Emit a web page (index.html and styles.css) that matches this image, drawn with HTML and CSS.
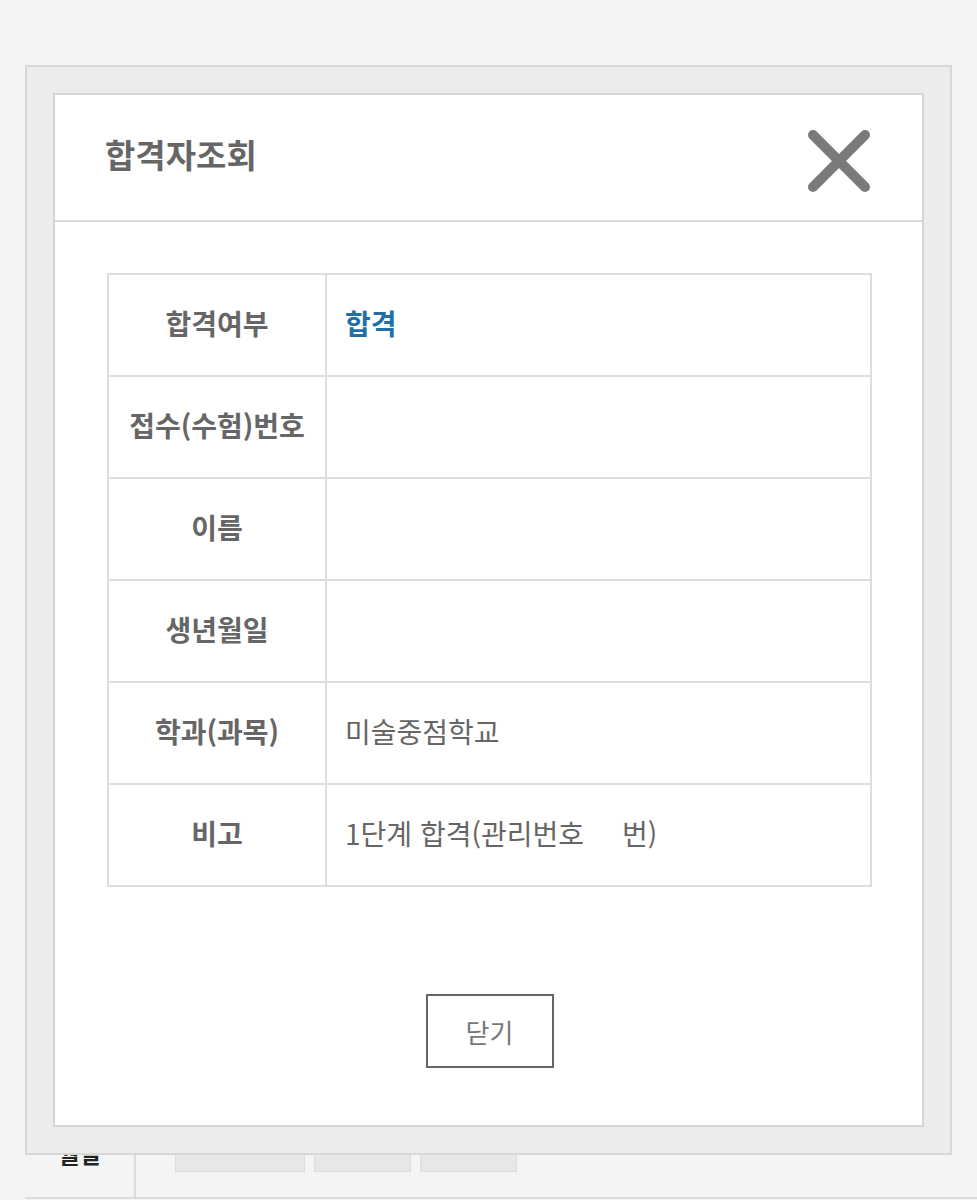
FILE: index.html
```html
<!DOCTYPE html>
<html lang="ko">

<head>
      <meta charset="UTF-8">
      <meta name="viewport" content="width=device-width, initial-scale=1.0">
      <title>합격자조회</title>
      <link rel="stylesheet" href="styles.css">
</head>

<body>
      <!-- page behind the popup -->
      <div class="page">
            <div class="formRow">
                  <div class="formLabel">생년월일</div>
                  <div class="formField">
                        <span class="inputBox wide"></span>
                        <span class="inputBox"></span>
                        <span class="inputBox"></span>
                  </div>
            </div>
      </div>

      <!-- result popup -->
      <div class="popupFrame">
            <div class="popup">
                  <div class="popupHead">
                        <h1 class="popupTitle">합격자조회</h1>
                        <button class="closeIcon" type="button" aria-label="닫기">
                              <svg width="64" height="64" viewBox="0 0 64 64">
                                    <line x1="6" y1="6" x2="58" y2="58" />
                                    <line x1="58" y1="6" x2="6" y2="58" />
                              </svg>
                        </button>
                  </div>

                  <div class="popupBody">
                        <table class="resultTable">
                              <tr>
                                    <th>합격여부</th>
                                    <td class="pass">합격</td>
                              </tr>
                              <tr>
                                    <th>접수(수험)번호</th>
                                    <td></td>
                              </tr>
                              <tr>
                                    <th>이름</th>
                                    <td></td>
                              </tr>
                              <tr>
                                    <th>생년월일</th>
                                    <td></td>
                              </tr>
                              <tr>
                                    <th>학과(과목)</th>
                                    <td>미술중점학교</td>
                              </tr>
                              <tr>
                                    <th>비고</th>
                                    <td>1단계 합격(관리번호<span class="blank"></span>번)</td>
                              </tr>
                        </table>

                        <div class="buttons">
                              <button class="btnClose" type="button">닫기</button>
                        </div>
                  </div>
            </div>
      </div>
</body>

</html>
```

FILE: styles.css
```css
/* Style on Body */
body {
      margin: 0;
      background-color: #f3f4f6;
      font-family: "Noto Sans CJK KR", "Noto Sans", sans-serif;
}

/* page behind the popup */
.page {
      height: 1200px;
      display: flex;
      flex-direction: column;
      justify-content: flex-end;
      padding-bottom: 1px;
      box-sizing: border-box;
}

.formRow {
      display: flex;
      height: 81px;
      margin-left: 25px;
      border-bottom: 2px solid #dcdcdc;
}

.formLabel {
      width: 111px;
      box-sizing: border-box;
      padding: 0 30px;
      border-right: 2px solid #dcdcdc;
      color: #222;
      font-size: 23px;
      font-weight: 700;
      line-height: 25px;
      text-align: center;
}

.formField {
      display: flex;
      gap: 9px;
      padding: 18px 0 0 39px;
}

.inputBox {
      width: 95px;
      height: 36px;
      background-color: #e7e7e7;
      border: 1px solid #dcdcdc;
}

.inputBox.wide {
      width: 128px;
}

/* popup frame laid over the page */
.popupFrame {
      position: absolute;
      top: 65px;
      left: 25px;
      width: 927px;
      box-sizing: border-box;
      padding: 26px;
      background-color: #ececec;
      border: 2px solid #d8d8d8;
}

.popup {
      background-color: #fff;
      border: 2px solid #d6d6d6;
}

.popupHead {
      display: flex;
      align-items: center;
      justify-content: space-between;
      height: 125px;
      padding: 0 51px 0 50px;
      border-bottom: 2px solid #dadada;
}

.popupTitle {
      margin: -8px 0 0;
      color: #666;
      font-size: 33px;
      font-weight: 700;
}

.closeIcon {
      padding: 0;
      margin-top: 6px;
      border: none;
      background: none;
      line-height: 0;
}

.closeIcon line {
      stroke: #7a7a7a;
      stroke-width: 10;
      stroke-linecap: round;
}

.popupBody {
      padding: 51px 50px 57px 52px;
}

/* result table */
.resultTable {
      width: 100%;
      border-collapse: collapse;
      border: 2px solid #dedede;
}

.resultTable th,
.resultTable td {
      height: 95px;
      padding: 0 0 5px;
      border: 2px solid #dedede;
      color: #666;
      font-size: 28px;
}

.resultTable th {
      width: 216px;
      font-weight: 700;
      text-align: center;
}

.resultTable td {
      padding-left: 18px;
      text-align: left;
}

.resultTable td.pass {
      color: #1f6fa9;
      font-weight: 700;
}

.blank {
      display: inline-block;
      width: 38px;
}

/* Style on Buttons */
.buttons {
      display: flex;
      justify-content: center;
      margin-top: 107px;
}

.btnClose {
      width: 128px;
      height: 74px;
      border: 2px solid #666;
      background-color: #fff;
      color: #777;
      font-family: inherit;
      font-size: 26px;
}
```
